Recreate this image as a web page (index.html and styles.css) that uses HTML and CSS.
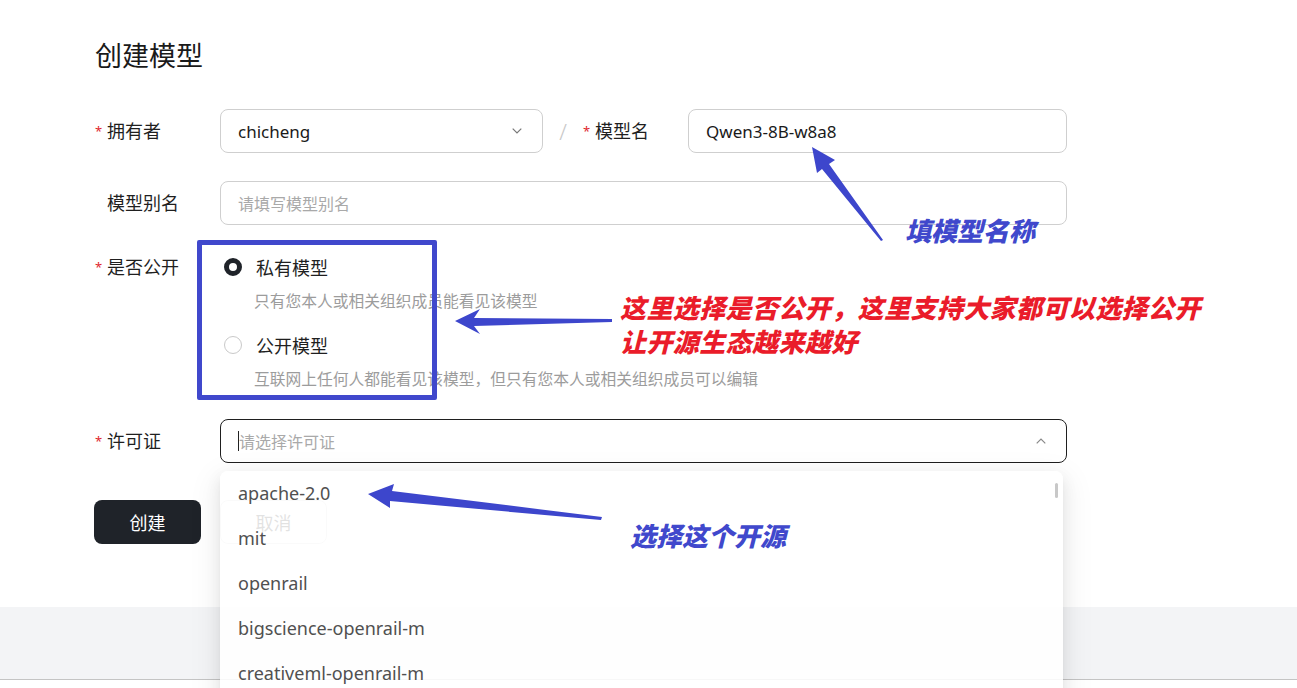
FILE: index.html
```
<!DOCTYPE html>
<html lang="zh-CN">
<head>
    <meta charset="UTF-8">
    <title>创建模型</title>
    <link rel="stylesheet" href="styles.css">
</head>
<body>
    <div class="page">
        <main class="content">
            <h1>创建模型</h1>
            <form class="form">
                <div class="row">
                    <label class="label"><span class="req">*</span>拥有者</label>
                    <div class="select owner">
                        <span class="value">chicheng</span>
                        <svg class="chevron" width="10" height="6" viewBox="0 0 10 6"><path d="M0.7 0.7L5 5L9.3 0.7" fill="none" stroke="#777" stroke-width="1.2"/></svg>
                    </div>
                    <span class="slash">/</span>
                    <label class="label label-name"><span class="req">*</span>模型名</label>
                    <div class="input grow"><span class="value">Qwen3-8B-w8a8</span></div>
                </div>

                <div class="row row-alias">
                    <label class="label"><span class="req"></span>模型别名</label>
                    <div class="input grow"><span class="placeholder">请填写模型别名</span></div>
                </div>

                <div class="row row-public">
                    <label class="label"><span class="req">*</span>是否公开</label>
                    <div class="radio-group">
                        <div class="radio-option">
                            <span class="radio checked"></span>
                            <span class="radio-title">私有模型</span>
                        </div>
                        <div class="radio-desc">只有您本人或相关组织成员能看见该模型</div>
                        <div class="radio-option second">
                            <span class="radio"></span>
                            <span class="radio-title">公开模型</span>
                        </div>
                        <div class="radio-desc">互联网上任何人都能看见该模型，但只有您本人或相关组织成员可以编辑</div>
                    </div>
                </div>

                <div class="row row-license">
                    <label class="label"><span class="req">*</span>许可证</label>
                    <div class="license-wrap">
                        <div class="select license open">
                            <span class="caret"></span><span class="placeholder">请选择许可证</span>
                            <svg class="chevron" width="10" height="6" viewBox="0 0 10 6"><path d="M0.7 5.3L5 1L9.3 5.3" fill="none" stroke="#888" stroke-width="1.2"/></svg>
                        </div>
                        <div class="dropdown">
                            <div class="option">apache-2.0</div>
                            <div class="option">mit</div>
                            <div class="option">openrail</div>
                            <div class="option">bigscience-openrail-m</div>
                            <div class="option">creativeml-openrail-m</div>
                            <div class="option">bigcode-openrail-m</div>
                            <span class="scroll-thumb"></span>
                        </div>
                    </div>
                </div>

                <div class="actions">
                    <button type="button" class="btn btn-primary">创建</button>
                    <button type="button" class="btn btn-cancel">取消</button>
                </div>
            </form>
        </main>
        <footer class="footer"></footer>

        <!-- screenshot annotations -->
        <div class="note-box"></div>
        <svg class="arrows" width="1297" height="688" viewBox="0 0 1297 688">
            <polygon points="812,147 835,160 829,164 883,240 881,241 822,169 817,173" />
            <polygon points="455,321 480,309 474,318 612,319 612,322 474,326 480,334" />
            <polygon points="368,494 394,484 392,491 602,517 601,520 390,501 390,508" />
        </svg>
        <div class="note note-name">填模型名称</div>
        <div class="note note-public">这里选择是否公开，这里支持大家都可以选择公开<br>让开源生态越来越好</div>
        <div class="note note-license">选择这个开源</div>
    </div>
</body>
</html>
```

FILE: styles.css
```
html, body {
    margin: 0;
    padding: 0;
    overflow: hidden;
    background: #fff;
}
body {
    font-family: "Noto Sans", "Noto Sans CJK SC", sans-serif;
    color: #1f1f1f;
}
.page {
    position: relative;
    width: 1297px;
    height: 688px;
}
.content {
    height: 607px;
    box-sizing: border-box;
    padding: 38px 0 0 95px;
}
h1 {
    margin: 0;
    font-size: 27px;
    line-height: 36px;
    font-weight: 400;
    color: #1a1a1a;
}
.form {
    width: 972px;
    margin-top: 35px;
}
.row {
    display: flex;
    align-items: flex-start;
}
.label {
    width: 125px;
    flex-shrink: 0;
    font-size: 18px;
    line-height: 44px;
    color: #1f1f1f;
}
.req {
    display: inline-block;
    width: 12px;
    color: #e0282e;
    font-size: 13px;
    vertical-align: top;
    line-height: 44px;
}
.select, .input {
    box-sizing: border-box;
    height: 44px;
    border: 1px solid #cfcfcf;
    border-radius: 8px;
    padding: 0 17px;
    display: flex;
    align-items: center;
    font-size: 17px;
    background: #fff;
}
.owner {
    width: 323px;
    justify-content: space-between;
}
.owner .chevron {
    margin-right: 3px;
}
.grow {
    flex: 1;
}
.value {
    color: #1a1a1a;
}
.placeholder {
    color: #a9a9a9;
    font-size: 16px;
}
.slash {
    width: 40px;
    text-align: center;
    font-size: 22px;
    line-height: 44px;
    color: #c8c8c8;
    font-weight: 300;
}
.label-name {
    width: 105px;
}
.row-alias {
    margin-top: 28px;
}
.row-public {
    margin-top: 20px;
}
.radio-group {
    display: flex;
    flex-direction: column;
}
.radio-option {
    display: flex;
    align-items: center;
    height: 44px;
    padding-left: 4px;
    gap: 14px;
    font-size: 18px;
}
.radio-option.second {
    margin-top: 11px;
}
.radio {
    box-sizing: border-box;
    width: 18px;
    height: 18px;
    border-radius: 50%;
    border: 1px solid #c9c9c9;
    background: #fff;
}
.radio.checked {
    border: 5px solid #1f2329;
}
.radio-desc {
    margin: 1px 0 0 34px;
    font-size: 15.75px;
    line-height: 22px;
    color: #9c9c9c;
}
.row-license {
    margin-top: 29px;
}
.license-wrap {
    position: relative;
    flex: 1;
}
.license {
    border-color: #1f1f1f;
    justify-content: flex-start;
}
.license .chevron {
    margin-left: auto;
    margin-right: 3px;
}
.caret {
    display: inline-block;
    width: 1px;
    height: 20px;
    background: #222;
}
.dropdown {
    position: absolute;
    z-index: 5;
    top: 52px;
    left: 0;
    width: 843px;
    height: 280px;
    overflow: hidden;
    background: rgba(255, 255, 255, 0.86);
    border-radius: 8px;
    box-shadow: 0 6px 16px rgba(0, 0, 0, 0.08), 0 3px 6px -4px rgba(0, 0, 0, 0.12), 0 9px 28px 8px rgba(0, 0, 0, 0.05);
}
.option {
    height: 45px;
    line-height: 45px;
    padding-left: 18px;
    font-size: 18px;
    color: #505050;
}
.scroll-thumb {
    position: absolute;
    top: 12px;
    right: 5px;
    width: 3px;
    height: 15px;
    border-radius: 2px;
    background: #c8c8c8;
}
.actions {
    display: flex;
    gap: 19px;
    margin-top: 37px;
    margin-left: -1px;
}
.btn {
    width: 107px;
    height: 44px;
    border-radius: 8px;
    font-family: inherit;
    font-size: 18px;
    cursor: pointer;
}
.btn-primary {
    background: #1f2329;
    border: none;
    color: #fff;
}
.btn-cancel {
    background: #fff;
    border: 1px solid #dcdcdc;
    color: #333;
}
.footer {
    height: 72px;
    background: #f3f4f6;
    border-bottom: 1px solid #c4c4c4;
}

/* annotations drawn over the screenshot */
.note-box {
    position: absolute;
    left: 197px;
    top: 240px;
    width: 240px;
    height: 160px;
    box-sizing: border-box;
    border: 5px solid #4048cc;
    border-radius: 2px;
    z-index: 10;
}
.arrows {
    position: absolute;
    left: 0;
    top: 0;
    z-index: 10;
    fill: #3d46cc;
    pointer-events: none;
}
.note {
    position: absolute;
    z-index: 10;
    font-family: "Noto Sans CJK SC", sans-serif;
    font-size: 26px;
    font-weight: 900;
    font-style: italic;
    line-height: 26px;
    white-space: nowrap;
}
.note-name {
    left: 905px;
    top: 217px;
    color: #4048cc;
}
.note-public {
    left: 620px;
    top: 290px;
    line-height: 34px;
    letter-spacing: 0.4px;
    color: #ea1c2a;
}
.note-license {
    left: 630px;
    top: 522px;
    color: #4048cc;
}
```
